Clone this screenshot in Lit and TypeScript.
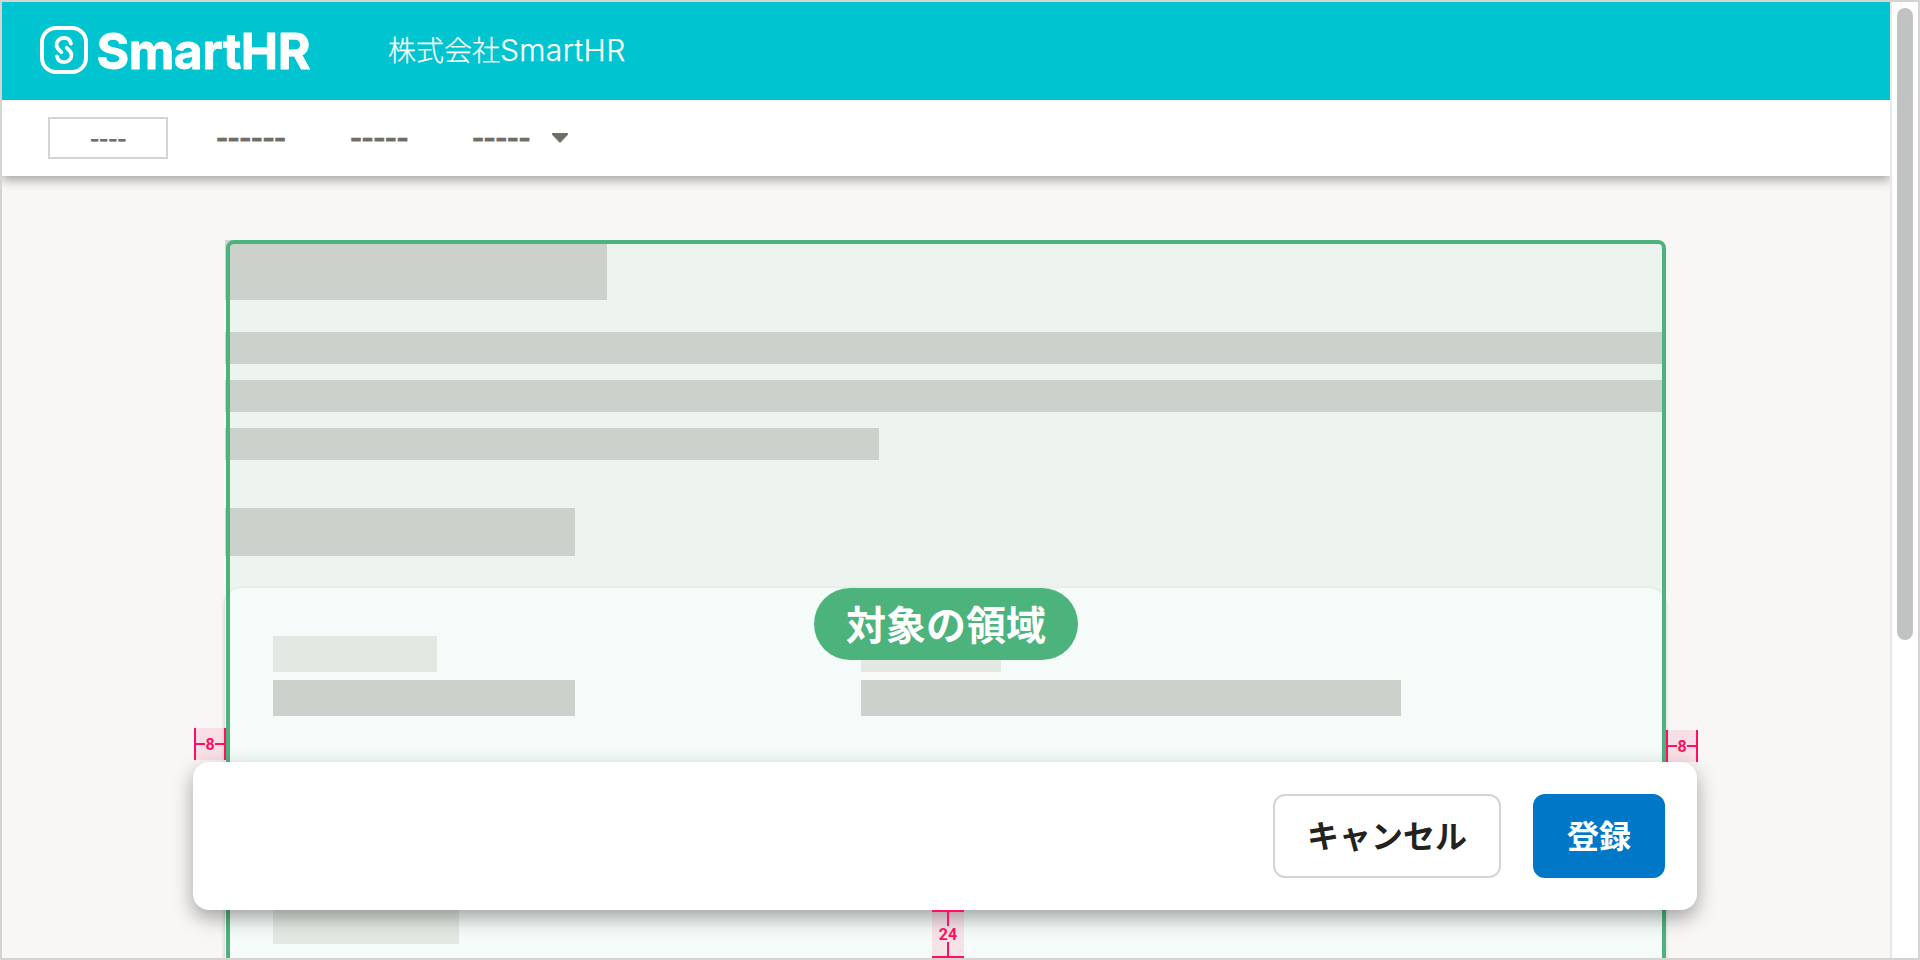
import { LitElement, html, css, svg } from "lit";
import { customElement, property } from "lit/decorators.js";

@customElement("spacing-marker")
class SpacingMarker extends LitElement {
  @property() value = "";
  @property({ reflect: true }) direction = "horizontal";

  static styles = css`
    :host {
      display: flex;
      box-sizing: border-box;
      align-items: center;
      background: rgba(255, 15, 98, 0.1);
      color: #ff0f62;
      font: 700 16px/20px Roboto, sans-serif;
      width: 32px;
      height: 32px;
      border-left: 2px solid;
      border-right: 2px solid;
    }
    :host([direction="vertical"]) {
      flex-direction: column;
      height: 48px;
      border: 0;
      border-top: 2px solid;
      border-bottom: 2px solid;
    }
    .line {
      flex: 1;
      height: 2px;
      background: currentColor;
    }
    :host([direction="vertical"]) .line {
      width: 2px;
      height: auto;
    }
    .value {
      width: 10px;
      padding-top: 2px;
      text-align: center;
    }
    :host([direction="vertical"]) .value {
      width: auto;
      height: 16px;
      padding-top: 0;
      line-height: 17px;
    }
  `;

  render() {
    return html`<span class="line"></span><span class="value">${this.value}</span><span class="line"></span>`;
  }
}

@customElement("app-root")
class AppRoot extends LitElement {
  static styles = css`
    :host {
      display: block;
      font-family: "Noto Sans CJK JP", sans-serif;
    }
    * {
      box-sizing: border-box;
    }
    .window {
      width: 1920px;
      height: 960px;
      border: 2px solid #d6d3d0;
      display: grid;
      grid-template-columns: 1888px 28px;
      overflow: hidden;
    }
    .page {
      position: relative;
      overflow: hidden;
      background: #f8f7f6;
      height: 956px;
    }
    .header {
      position: relative;
      z-index: 1;
      height: 98px;
      background: #00c4cf;
      color: #fff;
      display: flex;
      align-items: center;
      padding-left: 38px;
    }
    .logo {
      display: block;
      width: 276px;
      height: 52px;
      overflow: visible;
    }
    .company {
      margin-left: 72px;
      margin-bottom: 4px;
      font-size: 28px;
      font-weight: 300;
      line-height: 40px;
      display: flex;
      align-items: baseline;
      -webkit-text-stroke: 0.25px #fff;
    }
    .company-latin {
      font-family: Inter, sans-serif;
      font-size: 30px;
      letter-spacing: 0.35px;
    }
    .nav {
      position: relative;
      height: 76px;
      background: #fff;
      box-shadow: 0 4px 10px rgba(30, 25, 20, 0.38);
      display: flex;
      align-items: center;
      padding: 0 46px;
      color: #706d65;
      font-family: Inter, sans-serif;
      font-weight: 700;
      font-feature-settings: "calt" 0;
      -webkit-text-stroke: 0.3px #706d65;
    }
    .nav-button {
      width: 120px;
      height: 42px;
      border: 2px solid #d6d3d0;
      font-size: 22px;
      line-height: 40px;
      padding-left: 39.5px;
      letter-spacing: -1.2px;
      -webkit-text-stroke: 0;
    }
    .nav-item {
      font-size: 28px;
      line-height: 40px;
      letter-spacing: -1.5px;
      white-space: nowrap;
    }
    .n1 { width: 134px; margin-left: 47.5px; }
    .n2 { width: 122px; }
    .n3 { width: 80.5px; }
    .caret {
      width: 16px;
      height: 10px;
      display: block;
    }
    .main {
      width: 1440px;
      margin: 64px 0 0 223px;
      display: flex;
      flex-direction: column;
    }
    .bar {
      background: #d6d3d0;
    }
    .bar.soft {
      background: #edebe8;
    }
    .title { width: 382px; height: 60px; margin-bottom: 32px; }
    .line { height: 32px; margin-bottom: 16px; }
    .short { width: 654px; margin-bottom: 48px; }
    .heading { width: 350px; height: 48px; margin-bottom: 32px; }
    .card {
      background: #fff;
      border-radius: 16px;
      height: 420px;
      padding: 48px;
      box-shadow: 0 2px 4px rgba(30, 25, 20, 0.25);
      display: grid;
      grid-template-columns: 588px 1fr;
      grid-auto-rows: 80px;
      row-gap: 192px;
    }
    .field {
      display: flex;
      flex-direction: column;
      gap: 8px;
    }
    .field .bar {
      height: 36px;
    }
    .w164 { width: 164px; }
    .w302 { width: 302px; }
    .w140 { width: 140px; }
    .w540 { width: 540px; }
    .w186 { width: 186px; }
    .area {
      position: absolute;
      left: 224px;
      top: 238px;
      width: 1440px;
      height: 760px;
      border: 4px solid #4cb37d;
      border-radius: 8px;
      background: none;
    }
    .area::before {
      content: "";
      display: block;
      height: 100%;
      background: rgba(76, 179, 140, 0.06);
    }
    .pill {
      position: absolute;
      left: 812px;
      top: 586px;
      width: 264px;
      height: 72px;
      border-radius: 36px;
      background: #4cb37d;
      color: #fff;
      font-size: 40px;
      font-weight: 700;
      line-height: 70px;
      text-align: center;
    }
    .actions {
      position: absolute;
      left: 191px;
      top: 760px;
      width: 1504px;
      height: 148px;
      border-radius: 16px;
      background: #fff;
      box-shadow: 0 8px 20px rgba(3, 3, 2, 0.35);
      display: flex;
      justify-content: flex-end;
      align-items: center;
      gap: 32px;
      padding: 0 32px;
    }
    .button {
      font: 700 32px/76px "Noto Sans CJK JP", sans-serif;
      height: 84px;
      width: 228px;
      padding: 0 0 4px 0;
      border: 2px solid #d6d3d0;
      border-radius: 12px;
      background: #fff;
      color: #23221e;
      text-align: center;
    }
    .button.primary {
      width: 132px;
      color: #fff;
      background: #0077c7;
      border-color: #0077c7;
    }
    .marker {
      position: absolute;
    }
    .m-left { left: 192px; top: 726px; }
    .m-right { left: 1664px; top: 728px; }
    .m-bottom { left: 930px; top: 908px; }
    .scroll {
      background: #fff;
      border-left: 2px solid #e9e8e7;
      padding: 6px 5px;
    }
    .thumb {
      height: 632px;
      border-radius: 8px;
      background: #c1c3c2;
    }
  `;

  private logo() {
    return svg`
      <g fill="none" stroke="#fff" stroke-linecap="round" transform="translate(0 -1)">
        <rect x="2" y="4" width="44" height="44" rx="14" stroke-width="4" />
        <path stroke-width="3.7" d="M31 19.6C30.2 15.6 27.4 13.8 24 13.8C19.8 13.8 16.5 16.8 16.5 20.8C16.5 25 19.6 26.2 21.4 28.2" />
        <path stroke-width="3.7" d="M17 32.4C17.8 36.4 20.6 38.2 24 38.2C28.2 38.2 31.5 35.2 31.5 31.2C31.5 27 28.4 25.8 26.6 23.8" />
      </g>
      <text x="56.5" y="43.6" textLength="214" lengthAdjust="spacing" font-family="Inter, sans-serif"
        font-size="50" font-weight="700" fill="#fff" stroke="#fff" stroke-width="0.8" stroke-linejoin="round">SmartHR</text>`;
  }

  render() {
    return html`
      <div class="window">
        <div class="page">
          <header class="header">
            <svg class="logo" viewBox="0 0 276 52">${this.logo()}</svg>
            <div class="company">株式会社<span class="company-latin">SmartHR</span></div>
          </header>
          <nav class="nav">
            <div class="nav-button">----</div>
            <div class="nav-item n1">------</div>
            <div class="nav-item n2">-----</div>
            <div class="nav-item n3">-----</div>
            <svg class="caret" viewBox="0 0 16 10"><path fill="#706d65" d="M1 0H15Q17 .5 15.6 2L9 9Q8 10 7 9L.4 2Q-1 .5 1 0Z" /></svg>
          </nav>
          <main class="main">
            <div class="bar title"></div>
            <div class="bar line"></div>
            <div class="bar line"></div>
            <div class="bar line short"></div>
            <div class="bar heading"></div>
            <section class="card">
              <div class="field"><div class="bar soft w164"></div><div class="bar w302"></div></div>
              <div class="field"><div class="bar soft w140"></div><div class="bar w540"></div></div>
              <div class="field"><div class="bar soft w186"></div></div>
            </section>
          </main>
          <div class="area"></div>
          <div class="pill">対象の領域</div>
          <div class="actions">
            <button class="button">キャンセル</button>
            <button class="button primary">登録</button>
          </div>
          <spacing-marker class="marker m-left" value="8"></spacing-marker>
          <spacing-marker class="marker m-right" value="8"></spacing-marker>
          <spacing-marker class="marker m-bottom" value="24" direction="vertical"></spacing-marker>
        </div>
        <div class="scroll"><div class="thumb"></div></div>
      </div>
    `;
  }
}
